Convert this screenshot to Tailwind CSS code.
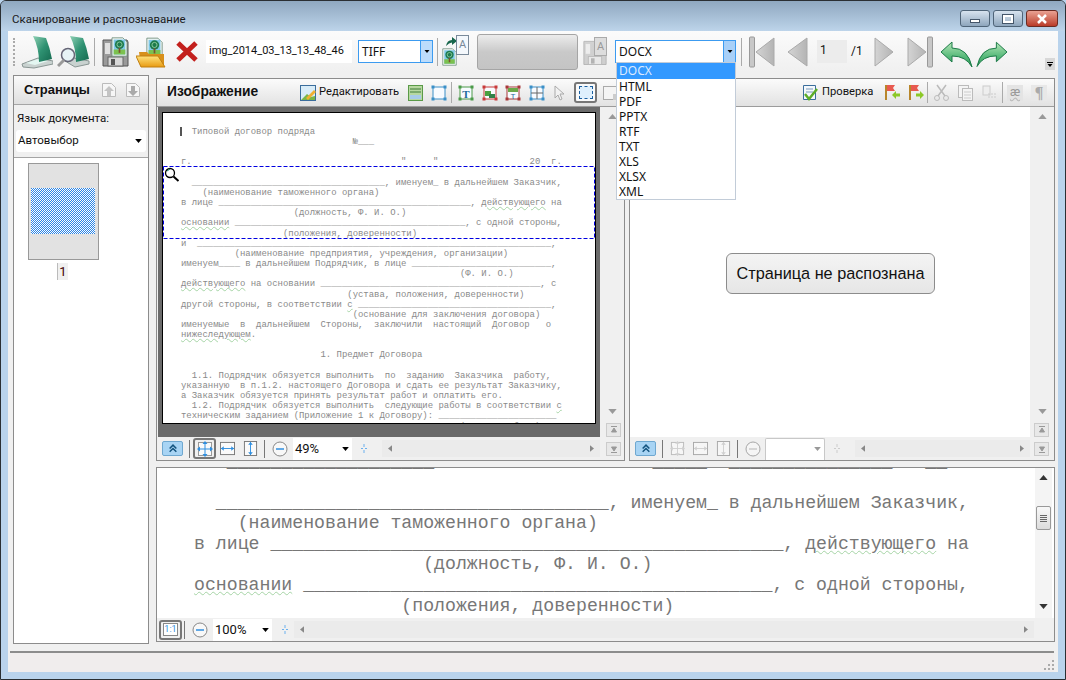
<!DOCTYPE html>
<html lang="ru">
<head>
  <meta charset="UTF-8">
  <title>Сканирование и распознавание</title>
  <script src="https://cdn.jsdelivr.net/npm/@tailwindcss/browser@4"></script>
</head>
<body class="bg-[#b9d3ec]">

<svg class="absolute w-0 h-0" xmlns="http://www.w3.org/2000/svg">
  <defs>
    <linearGradient id="lid" x1="0" y1="0" x2="1" y2="1"><stop offset="0" stop-color="#8fd0b4"/><stop offset=".5" stop-color="#2f9272"/><stop offset="1" stop-color="#14694f"/></linearGradient>
    <linearGradient id="gr" x1="0" y1="0" x2="1" y2="0"><stop offset="0" stop-color="#d4d4d4"/><stop offset="1" stop-color="#b4b4b4"/></linearGradient>
    <linearGradient id="arrow" x1="0" y1="0" x2="0" y2="1"><stop offset="0" stop-color="#b6e6b8"/><stop offset=".6" stop-color="#54b878"/><stop offset="1" stop-color="#2f9a58"/></linearGradient>
    <linearGradient id="folder" x1="0" y1="0" x2="0" y2="1"><stop offset="0" stop-color="#ffe27a"/><stop offset="1" stop-color="#e89a12"/></linearGradient>
    <pattern id="dither" width="2" height="2" patternUnits="userSpaceOnUse"><rect width="2" height="2" fill="#fff"/><rect width="1" height="1" fill="#2b85e6"/><rect x="1" y="1" width="1" height="1" fill="#2b85e6"/></pattern>
  </defs>
  <symbol id="tree" viewBox="0 0 20 24">
    <path d="M1 1h13l5 5v17H1z" fill="#f4f8f4" stroke="#6a8a7a"/>
    <rect x="3" y="3" width="14" height="18" fill="#7fc8e8"/>
    <rect x="3" y="15" width="14" height="6" fill="#7cc14e"/>
    <circle cx="10" cy="9" r="5.500" fill="#1d7a4e"/>
    <circle cx="10" cy="9" r="3" fill="none" stroke="#9ad6a8"/>
    <rect x="9" y="13" width="2" height="6" fill="#7a5230"/>
  </symbol>
  <symbol id="floppy" viewBox="0 0 27 29">
    <path d="M1 2h24l1 2v24H1z" fill="#9a9a9a" stroke="#555"/>
    <rect x="6" y="19" width="15" height="9" fill="#d8d8d8" stroke="#666"/>
    <rect x="9" y="21" width="4" height="6" fill="#555"/>
    <rect x="3" y="5" width="5" height="11" fill="#e0e0e0"/>
  </symbol>
  <symbol id="triUp" viewBox="0 0 10 6"><path d="M5 0l5 6H0z" fill="currentColor"/></symbol>
  <symbol id="triDown" viewBox="0 0 10 6"><path d="M0 0h10L5 6z" fill="currentColor"/></symbol>
  <symbol id="triLeft" viewBox="0 0 6 10"><path d="M6 0v10L0 5z" fill="currentColor"/></symbol>
  <symbol id="triRight" viewBox="0 0 6 10"><path d="M0 0l6 5-6 5z" fill="currentColor"/></symbol>
  <symbol id="dbl" viewBox="0 0 12 10"><path d="M2 5l4-4 4 4M2 9l4-4 4 4" fill="none" stroke="currentColor" stroke-width="1.800"/></symbol>
  <symbol id="fitAll" viewBox="0 0 16 16"><rect x="1.500" y="1.500" width="13" height="13" fill="#fafafa" stroke="#999"/><path d="M8 1v14M1 8h14" stroke="currentColor"/><path d="M8 0l2.500 3h-5zM8 16l2.500-3h-5zM0 8l3-2.500v5zM16 8l-3-2.500v5z" fill="currentColor"/></symbol>
  <symbol id="fitW" viewBox="0 0 16 16"><rect x=".5" y="1.500" width="15" height="13" fill="#fafafa" stroke="#777"/><path d="M1 8h14" stroke="currentColor"/><path d="M1 8l3-2.500v5zM15 8l-3-2.500v5z" fill="currentColor"/></symbol>
  <symbol id="fitH" viewBox="0 0 16 16"><rect x="1.500" y=".5" width="13" height="15" fill="#fafafa" stroke="#777"/><path d="M8 1v14" stroke="currentColor"/><path d="M8 1l2.500 3h-5zM8 15l2.500-3h-5z" fill="currentColor"/></symbol>
  <symbol id="minus" viewBox="0 0 16 16"><circle cx="8" cy="8" r="7" fill="#f8f8f8" stroke="#888"/><path d="M4 8h8" stroke="currentColor" stroke-width="1.500"/></symbol>
  <symbol id="frame" viewBox="0 0 16 16"><rect x="2" y="2" width="12" height="12" fill="#f8fbff" stroke="currentColor"/><rect x=".5" y=".5" width="3" height="3" fill="currentColor"/><rect x="12.500" y=".5" width="3" height="3" fill="currentColor"/><rect x=".5" y="12.500" width="3" height="3" fill="currentColor"/><rect x="12.500" y="12.500" width="3" height="3" fill="currentColor"/></symbol>
</svg>

<div class="relative w-[1066px] h-[680px] overflow-hidden border border-[#2a2f33] rounded-t-md bg-[#b9d3ec] font-['Roboto',sans-serif] text-[11.500px] text-[#111]">

  <!-- title bar -->
  <div class="h-[30px] flex items-start bg-linear-to-b from-[#8fa8c0] to-[#bdd4ea]">
    <span class="ml-[11px] mt-[9px] leading-[18px] text-[#1a1a1a]">Сканирование и распознавание</span>
    <div class="ml-auto mt-[9px] mr-[7px] flex gap-[3px]">
      <div class="w-[30px] h-[17px] rounded-[3px] border border-[#4f6478] bg-linear-to-b from-[#d7e3ef] to-[#8ea6bd] flex items-center justify-center"><div class="w-[10px] h-[4px] mt-[5px] bg-white border border-[#44566a]"></div></div>
      <div class="w-[30px] h-[17px] rounded-[3px] border border-[#4f6478] bg-linear-to-b from-[#d7e3ef] to-[#8ea6bd] flex items-center justify-center"><div class="w-[10px] h-[8px] bg-white/10 border-2 border-white outline outline-[#44566a]"></div></div>
      <div class="w-[32px] h-[17px] rounded-[3px] border border-[#6b2b22] bg-linear-to-b from-[#e9a193] to-[#b93a28] flex items-center justify-center">
        <svg class="w-[12px] h-[10px]" viewBox="0 0 12 10"><path d="M2 1l8 8M10 1L2 9" stroke="#fff" stroke-width="2.500"/></svg>
      </div>
    </div>
  </div>

  <div class="ml-[7px] w-[1050px] h-[641px] bg-[#f0f0f0] flex flex-col">

    <!-- main toolbar -->
    <div class="relative h-[41px] flex-none flex items-center bg-linear-to-b from-[#fbfbfb] to-[#f0f0f0]">
      <div class="ml-[5px] w-[2px] h-[28px] border-l-2 border-dotted border-[#aaa]"></div>
      <svg class="ml-[6px] w-[32px] h-[34px]" viewBox="0 0 32 34">
        <path d="M1 29l16-6 15 3v3l-19 4-11-1z" fill="#c9d2d0" stroke="#8a9694"/>
        <path d="M5 28l12-4 10 2-13 4z" fill="#e3f6f1"/>
        <path d="M12 1l13 2q4 10 6 21l-13 3q0-14-6-26z" fill="url(#lid)"/>
      </svg>
      <svg class="ml-[4px] w-[33px] h-[34px]" viewBox="0 0 33 34">
        <path d="M8 26l9-3 15 3v3l-14 3z" fill="#c9d2d0" stroke="#8a9694"/>
        <path d="M13 1l13 2q4 10 6 21l-13 3q0-14-6-26z" fill="url(#lid)"/>
        <circle cx="11" cy="20" r="6.500" fill="#e6f3f6" stroke="#667" stroke-width="1.500"/>
        <path d="M7 25l-6 6" stroke="#999" stroke-width="3"/>
      </svg>
      <div class="ml-[4px] w-px h-[28px] bg-[#aaa]"></div>
      <div class="relative ml-[7px] w-[27px] h-[30px]">
        <svg class="absolute left-0 top-[1px] w-[27px] h-[29px]"><use href="#floppy"/></svg>
        <svg class="absolute left-[9px] top-0 w-[17px] h-[20px]"><use href="#tree"/></svg>
      </div>
      <div class="relative ml-[7px] w-[30px] h-[30px]">
        <svg class="absolute left-[10px] top-0 w-[17px] h-[21px]"><use href="#tree"/></svg>
        <svg class="absolute left-0 top-[12px] w-[30px] h-[19px]" viewBox="0 0 30 19"><path d="M3 3h8l2 2h15v13H5z" fill="#d8901a"/><path d="M0 7h22l7 11H5z" fill="url(#folder)" stroke="#c07f10"/></svg>
      </div>
      <svg class="ml-[10px] w-[22px] h-[21px]" viewBox="0 0 22 21"><path d="M2 2l18 17M20 2L2 19" stroke="#c3201d" stroke-width="5"/></svg>
      <div class="ml-[8px] w-[146px] h-[23px] bg-white pl-[3px] text-[11px] leading-[22px] whitespace-nowrap">img_2014_03_13_13_48_46</div>
      <div class="ml-[6px] w-[75px] h-[23px] bg-white border border-[#3c9bf0] flex">
        <span class="flex-1 pl-[3px] leading-[21px] text-[12px] font-['Noto_Sans',sans-serif]">TIFF</span>
        <div class="w-[12px] bg-[#bcdcfb] border-l border-[#3c9bf0] flex items-center justify-center"><svg class="w-[6px] h-[3px] text-black"><use href="#triDown"/></svg></div>
      </div>
      <div class="ml-[4px] w-px h-[28px] bg-[#aaa]"></div>
      <div class="relative ml-[4px] w-[30px] h-[34px]">
        <svg class="absolute left-0 top-[11px] w-[15px] h-[22px]"><use href="#tree"/></svg>
        <svg class="absolute left-[3px] top-[2px] w-[12px] h-[10px]" viewBox="0 0 12 10"><path d="M1 9q1-6 6-6V0l5 4-5 4V5.500q-3 0-6 3.500z" fill="#17664c"/></svg>
        <div class="absolute left-[14px] top-0 w-[13px] h-[20px] border border-[#7a8a9a] bg-[#f4f8fc] text-center text-[11px] leading-[18px] text-[#789]">A</div>
      </div>
      <div class="ml-[5px] w-[101px] h-[36px] rounded-[3px] border border-[#a5a5a5] bg-linear-to-b from-[#ececec] via-[#c9c9c9] to-[#c4c4c4]"></div>
      <div class="relative ml-[5px] w-[27px] h-[30px]">
        <svg class="absolute left-0 top-[2px] w-[24px] h-[27px] opacity-40"><use href="#floppy"/></svg>
        <div class="absolute left-[11px] top-0 w-[13px] h-[19px] border border-[#aaa] bg-[#ddd] text-center text-[11px] leading-[17px] text-[#999]">A</div>
      </div>
      <!-- combo with open list -->
      <div class="relative ml-[5px] w-[121px] h-[23px] bg-white border border-[#3c9bf0] flex font-['Noto_Sans',sans-serif] text-[12px]">
        <span class="flex-1 pl-[3px] leading-[21px]">DOCX</span>
        <div class="w-[12px] bg-[#a8d0f8] border-l border-[#3c9bf0] flex items-center justify-center"><svg class="w-[6px] h-[3px] text-black"><use href="#triDown"/></svg></div>
        <div class="absolute z-10 left-0 top-[21px] w-[120px] h-[138px] bg-white border border-[#c2ccd8] leading-[15px]">
          <div class="h-[16px] pl-[2px] bg-[#3399ff] text-[#dceaff]">DOCX</div>
          <div class="pl-[2px]">HTML</div>
          <div class="pl-[2px]">PDF</div>
          <div class="pl-[2px]">PPTX</div>
          <div class="pl-[2px]">RTF</div>
          <div class="pl-[2px]">TXT</div>
          <div class="pl-[2px]">XLS</div>
          <div class="pl-[2px]">XLSX</div>
          <div class="pl-[2px]">XML</div>
        </div>
      </div>
      <div class="ml-[5px] w-px h-[28px] bg-[#aaa]"></div>
      <svg class="ml-[7px] w-[26px] h-[32px]" viewBox="0 0 26 32"><rect x=".5" y="1" width="5" height="30" rx="1" fill="#c8c8c8" stroke="#999"/><path d="M25 2v28L7 16z" fill="url(#gr)" stroke="#aaa"/></svg>
      <svg class="ml-[12px] w-[21px] h-[32px]" viewBox="0 0 21 32"><path d="M20 2v28L1 16z" fill="url(#gr)" stroke="#aaa"/></svg>
      <div class="ml-[9px] w-[30px] h-[23px] bg-[#ececec] pl-[3px] leading-[21px] text-[12px]">1</div>
      <div class="ml-[4px] w-[16px] leading-[21px] text-[12px]">/1</div>
      <svg class="ml-[7px] w-[20px] h-[32px]" viewBox="0 0 20 32"><path d="M1 2v28l18-14z" fill="url(#gr)" stroke="#aaa"/></svg>
      <svg class="ml-[13px] w-[26px] h-[32px]" viewBox="0 0 26 32"><rect x="20.500" y="1" width="5" height="30" rx="1" fill="#c8c8c8" stroke="#999"/><path d="M1 2v28l18-14z" fill="url(#gr)" stroke="#aaa"/></svg>
      <svg class="ml-[7px] w-[33px] h-[32px]" viewBox="0 0 33 32"><path d="M1 16L12 6v6q16 0 20 19-6-11-20-11v6z" fill="url(#arrow)" stroke="#1c7a48"/></svg>
      <svg class="ml-[3px] w-[32px] h-[32px]" viewBox="0 0 33 32"><path d="M32 16L21 6v6Q5 12 1 31q6-11 20-11v6z" fill="url(#arrow)" stroke="#1c7a48"/></svg>
      <div class="absolute right-[3px] bottom-[2px] w-[10px] h-[12px] bg-[#d8d8d8] flex flex-col items-center justify-center gap-px"><div class="w-[6px] h-px bg-black"></div><svg class="w-[6px] h-[3px] text-black"><use href="#triDown"/></svg></div>
    </div>

    <div class="flex-none h-[580px] flex">

      <!-- pages panel -->
      <div class="ml-[5px] mt-[3px] w-[136px] h-[569px] flex-none border border-[#8c8c8c] bg-white flex flex-col">
        <div class="h-[28px] flex-none flex items-center bg-linear-to-b from-[#fafafa] to-[#dfdfdf]">
          <span class="ml-[10px] w-[77px] font-['Liberation_Sans',sans-serif] font-bold text-[13px]">Страницы</span>
          <svg class="w-[16px] h-[16px]" viewBox="0 0 16 16"><path d="M1.500 1.500h9l4 4v9h-13z" fill="#f6f6f6" stroke="#bbb"/><path d="M8 4l5 5h-3v5H6V9H3z" fill="#c4c4c4"/></svg>
          <svg class="ml-[8px] w-[16px] h-[16px]" viewBox="0 0 16 16"><path d="M1.500 1.500h9l4 4v9h-13z" fill="#f6f6f6" stroke="#bbb"/><path d="M8 14l5-5h-3V4H6v5H3z" fill="#aaa"/></svg>
        </div>
        <div class="h-[54px] flex-none bg-[#f0f0f0] border-y border-[#a5a5a5] flex flex-col">
          <div class="mt-[4px] ml-[3px] leading-[18px]">Язык документа:</div>
          <div class="mt-[3px] ml-[2px] w-[130px] h-[22px] bg-white rounded-[3px] flex items-center justify-between pl-[2px] pr-[4px]">
            <span>Автовыбор</span><svg class="w-[7px] h-[4px] text-black"><use href="#triDown"/></svg>
          </div>
        </div>
        <div class="ml-[14px] mt-[5px] w-[71px] h-[97px] bg-[#e2e2e2] border border-[#999] pt-[24px] pl-[2px]">
          <svg class="w-[64px] h-[46px]" shape-rendering="crispEdges"><rect width="64" height="46" fill="url(#dither)"/></svg>
        </div>
        <div class="ml-[43px] mt-[3px] w-[11px] h-[17px] bg-[#f0f0f0] border-l border-[#bbb] text-center leading-[17px] text-[13px] text-[#400]">1</div>
      </div>

      <div class="ml-[7px] w-[899px] flex-none flex flex-col">
        <div class="mt-[6px] h-[383px] flex-none flex">

          <!-- image panel -->
          <div class="w-[469px] flex-none border border-[#8c8c8c] border-b-2 flex flex-col">
            <div class="h-[28px] flex-none flex items-center bg-linear-to-b from-[#fbfbfb] to-[#e2e2e2] border-b border-[#9c9c9c]">
              <span class="ml-[10px] w-[133px] font-['Liberation_Sans',sans-serif] font-bold text-[13.800px]">Изображение</span>
              <svg class="w-[16px] h-[16px]" viewBox="0 0 16 16"><rect x=".5" y=".5" width="15" height="15" fill="#d8ecf8" stroke="#3a6d9c"/><path d="M1 15l6-6 4 3 4-1v4z" fill="#7ab648"/><path d="M6 13L14 5l2 2-8 8z" fill="#f0b030"/></svg>
              <span class="ml-[3px] w-[80px] whitespace-nowrap text-[11.200px]">Редактировать</span>
              <svg class="ml-[9px] w-[15px] h-[16px]" viewBox="0 0 15 16"><rect x=".5" y=".5" width="14" height="15" fill="#b7d8a0" stroke="#5a9a48"/><path d="M2 4h11M2 7h11" stroke="#3f7a38"/><rect x="2" y="10" width="11" height="4" fill="#a8cce8"/></svg>
              <svg class="ml-[8px] w-[16px] h-[16px] text-[#3a8fc8]"><use href="#frame"/></svg>
              <div class="ml-[4px] w-px h-[21px] bg-[#aaa]"></div>
              <svg class="ml-[6px] w-[16px] h-[16px] text-[#4a9a48]" viewBox="0 0 16 16"><use href="#frame"/><text x="8" y="12.500" text-anchor="middle" font-size="11" font-weight="700" font-family="Liberation Serif" fill="#1f6a9c">T</text></svg>
              <svg class="ml-[8px] w-[16px] h-[16px] text-[#c83a3a]" viewBox="0 0 16 16"><use href="#frame"/><path d="M3 6h6v5H3z" fill="#4aa040"/><path d="M7 9h6v4H7z" fill="#2f8048"/></svg>
              <svg class="ml-[7px] w-[16px] h-[16px] text-[#a83838]" viewBox="0 0 16 16"><use href="#frame"/><rect x="3" y="3" width="10" height="4" fill="#6aa848"/><text x="8" y="14" text-anchor="middle" font-size="8" font-family="Liberation Sans" fill="#1f6a9c">T</text></svg>
              <svg class="ml-[8px] w-[16px] h-[16px] text-[#3a8fc8]" viewBox="0 0 16 16"><use href="#frame"/><path d="M8 2v12M2 8h12" stroke="#666"/></svg>
              <svg class="ml-[9px] w-[11px] h-[16px]" viewBox="0 0 11 16"><path d="M1 1v12l3-3 2 5 2-1-2-5h4z" fill="#f2f2f2" stroke="#aaa"/></svg>
              <div class="ml-[9px] w-[23px] h-[21px] rounded-[3px] border-2 border-[#777] bg-[#fafafa] flex items-center justify-center"><div class="w-[14px] h-[13px] bg-[#dff0fd] border border-dashed border-[#1a5fa0]"></div></div>
              <svg class="ml-[5px] w-[18px] h-[16px]" viewBox="0 0 18 16"><rect x="1.500" y="1.500" width="13" height="13" fill="#f4f4f4" stroke="#aaa"/><rect x="11" y="9" width="6" height="6" fill="#ccc"/></svg>
            </div>
            <div class="h-[330px] flex-none flex">
              <div class="ml-px w-[442px] flex-none bg-[#6b6b6b] pl-[4px] pt-[5px]">
                <!-- scanned page -->
                <div class="relative w-[434px] h-[312px] border border-black bg-white overflow-hidden">
                  <div class="absolute left-[17px] top-[14px] w-[2px] h-[9px] bg-[#555]"></div>
                  <div class="pl-[18px] pt-[14px] font-['Liberation_Mono',monospace] text-[8.950px] leading-[10.15px] text-[#8a8a8a] whitespace-pre">  Типовой договор подряда
                                №___

г.                                       "     "                 20  г.

  ____________________________________, именуем_ в дальнейшем Заказчик,
    (наименование таможенного органа)
в лице _______________________________________________, <span class="underline decoration-wavy decoration-1 decoration-[#a6d4a6]">действующего</span> на
                     (должность, Ф. И. О.)
<span class="underline decoration-wavy decoration-1 decoration-[#a6d4a6]">основании</span> ___________________________________________, с одной стороны,
                   (положения, доверенности)
и  __________________________________________________________________,
          (наименование предприятия, учреждения, организации)
именуем____ в дальнейшем Подрядчик, в лице __________________________,
                                                    (Ф. И. О.)
<span class="underline decoration-wavy decoration-1 decoration-[#a6d4a6]">действующего</span> на основании _________________________________________, с
                               (устава, положения, доверенности)
другой стороны, в соответствии <span class="underline decoration-wavy decoration-1 decoration-[#a6d4a6]">с</span> ____________________________________,
                                (основание для заключения договора)
именуемые  в  дальнейшем  Стороны,  заключили  настоящий  Договор   о
<span class="underline decoration-wavy decoration-1 decoration-[#a6d4a6]">нижеследующем</span>.

                          1. Предмет Договора

  1.1. Подрядчик обязуется выполнить  по  заданию  Заказчика  работу,
указанную  в п.1.2. настоящего Договора и сдать ее результат Заказчику,
а Заказчик обязуется принять результат работ и оплатить его.
  1.2. Подрядчик обязуется выполнить  следующие работы в соответствии <span class="underline decoration-wavy decoration-1 decoration-[#a6d4a6]">с</span>
техническим заданием (Приложение 1 к Договору): ______________________
                                                    (виды   работы)</div>
                  <!-- selection rectangle -->
                  <svg class="absolute left-0 top-[53px] w-[432px] h-[73px]"><rect x=".5" y=".5" width="431" height="72" fill="none" stroke="#0000e0" stroke-dasharray="4 2"/></svg>
                  <svg class="absolute left-[1px] top-[54px] w-[16px] h-[15px]" viewBox="0 0 16 15"><circle cx="6" cy="6" r="4.500" fill="#fff" stroke="#000" stroke-width="1.300"/><path d="M3 4l3-2" stroke="#1a8a70"/><path d="M9.500 9.500l5 4.500" stroke="#000" stroke-width="2"/></svg>
                </div>
              </div>
              <div class="w-[25px] flex-none flex flex-col items-center text-[#999]">
                <svg class="mt-[7px] w-[9px] h-[5px]"><use href="#triUp"/></svg>
                <svg class="mt-[290px] w-[9px] h-[5px]"><use href="#triDown"/></svg>
              </div>
            </div>
            <div class="relative h-[23px] flex-none flex items-center bg-[#f0f0f0]">
              <div class="ml-[5px] w-[21px] h-[15px] bg-[#a8d4f4] border border-[#6fa8d0] rounded-[2px] flex items-center justify-center text-[#14547f]"><svg class="w-[10px] h-[9px]"><use href="#dbl"/></svg></div>
              <div class="ml-[6px] w-px h-[18px] bg-[#777]"></div>
              <div class="ml-[3px] w-[23px] h-[21px] rounded-[3px] border-2 border-[#777] flex items-center justify-center text-[#2f8fe0]"><svg class="w-[16px] h-[16px]"><use href="#fitAll"/></svg></div>
              <svg class="ml-[4px] w-[15px] h-[15px] text-[#2f8fe0]"><use href="#fitW"/></svg>
              <svg class="ml-[8px] w-[15px] h-[15px] text-[#2f8fe0]"><use href="#fitH"/></svg>
              <div class="ml-[6px] w-px h-[18px] bg-[#777]"></div>
              <svg class="ml-[7px] w-[16px] h-[16px] text-[#2f8fe0]"><use href="#minus"/></svg>
              <div class="ml-[5px] w-[59px] h-[22px] bg-white flex items-center justify-between pl-[2px] pr-[3px] text-[13px]"><span>49%</span><svg class="w-[7px] h-[4px] text-black"><use href="#triDown"/></svg></div>
              <svg class="ml-[9px] w-[6px] h-[9px]" viewBox="0 0 6 9"><path d="M3 0v3M3 6v3M0 4.500h2M4 4.500h2" stroke="#6ab0ee"/></svg>
              <div class="ml-[15px] w-[218px] h-[17px] bg-[#ebebeb] flex items-center justify-between px-[6px] text-[#888]"><svg class="w-[4px] h-[7px]"><use href="#triLeft"/></svg><svg class="w-[4px] h-[7px]"><use href="#triRight"/></svg></div>
              <div class="absolute right-[3px] -top-[14px] w-[15px] h-[14px] bg-[#e8e8e8] border border-[#ccc] flex items-center justify-center text-[#999]"><svg class="w-[8px] h-[8px]" viewBox="0 0 8 8"><path d="M1 .5h6M4 2L1.500 6h5z" stroke="currentColor" fill="currentColor"/></svg></div>
              <div class="absolute right-[3px] top-[5px] w-[15px] h-[14px] bg-[#e8e8e8] border border-[#ccc] flex items-center justify-center text-[#999]"><svg class="w-[8px] h-[8px]" viewBox="0 0 8 8"><path d="M1 7.500h6M4 6L1.500 2h5z" stroke="currentColor" fill="currentColor"/></svg></div>
            </div>
          </div>

          <!-- recognized panel -->
          <div class="ml-[4px] w-[426px] flex-none border border-[#8c8c8c] border-b-2 flex flex-col">
            <div class="h-[28px] flex-none flex items-center bg-linear-to-b from-[#fbfbfb] to-[#e2e2e2] border-b border-[#9c9c9c]">
              <svg class="ml-[172px] w-[16px] h-[17px]" viewBox="0 0 16 17"><path d="M1.500 1.500h12v14h-12z" fill="#f4f8fc" stroke="#3a6d9c"/><path d="M4 5h7M4 8h7" stroke="#7a9ab8"/><path d="M3 10l4 5 8-10" fill="none" stroke="#5cad28" stroke-width="2.500"/></svg>
              <span class="ml-[4px] w-[53px] whitespace-nowrap text-[11.200px]">Проверка</span>
              <svg class="ml-[9px] w-[17px] h-[17px]" viewBox="0 0 17 17"><path d="M2 1v15" stroke="#b8862a" stroke-width="2"/><path d="M3 1h8l-2 3 2 3H3z" fill="#e85a50"/><path d="M8 11l4-4v2.500h4v3h-4V15z" fill="#8cc828"/></svg>
              <svg class="ml-[7px] w-[17px] h-[17px]" viewBox="0 0 17 17"><path d="M2 1v15" stroke="#b8862a" stroke-width="2"/><path d="M3 1h8l-2 3 2 3H3z" fill="#e85a50"/><path d="M16 11l-4-4v2.500H8v3h4V15z" fill="#8cc828"/></svg>
              <div class="ml-[2px] w-px h-[21px] bg-[#aaa]"></div>
              <svg class="ml-[5px] w-[17px] h-[17px]" viewBox="0 0 17 17"><path d="M4 1l8 11M13 1L5 12" stroke="#bbb" stroke-width="1.500"/><circle cx="4" cy="14" r="2.500" fill="none" stroke="#bbb"/><circle cx="13" cy="14" r="2.500" fill="none" stroke="#bbb"/></svg>
              <svg class="ml-[8px] w-[15px] h-[16px]" viewBox="0 0 15 16"><rect x=".5" y=".5" width="10" height="12" fill="#f4f4f4" stroke="#bbb"/><rect x="4.500" y="3.500" width="10" height="12" fill="#f4f4f4" stroke="#bbb"/><path d="M6 7h7M6 10h7M6 13h7" stroke="#ccc"/></svg>
              <svg class="ml-[9px] w-[15px] h-[16px]" viewBox="0 0 15 16"><rect x="1" y="1" width="7" height="9" fill="#eee" stroke="#ccc"/><path d="M6 9h8M6 12h8" stroke="#ccc" stroke-dasharray="2 1"/></svg>
              <div class="ml-[5px] w-px h-[21px] bg-[#aaa]"></div>
              <div class="ml-[4px] w-[16px] h-[16px] bg-[#e4e4e4] text-center text-[12px] leading-[15px] text-[#999] underline decoration-wavy decoration-[#bbb]">æ</div>
              <div class="ml-[8px] w-[16px] h-[16px] bg-[#e8e8e8] text-center font-['Liberation_Serif',serif] text-[16px] leading-[16px] font-bold text-[#aaa]">¶</div>
            </div>
            <div class="h-[330px] flex-none flex">
              <div class="w-[400px] flex-none bg-white flex items-center justify-center">
                <div class="w-[209px] h-[41px] mt-[3px] ml-[1px] rounded-[6px] border border-[#8c8c8c] bg-linear-to-b from-[#f4f4f4] to-[#e6e6e6] flex items-center justify-center font-['Liberation_Sans',sans-serif] text-[16.250px]">Страница не распознана</div>
              </div>
              <div class="flex-1 flex flex-col items-center text-[#999]">
                <svg class="mt-[7px] w-[9px] h-[5px]"><use href="#triUp"/></svg>
                <svg class="mt-[290px] w-[9px] h-[5px]"><use href="#triDown"/></svg>
              </div>
            </div>
            <div class="relative h-[23px] flex-none flex items-center bg-[#f0f0f0]">
              <div class="ml-[5px] w-[21px] h-[15px] bg-[#a8d4f4] border border-[#6fa8d0] rounded-[2px] flex items-center justify-center text-[#14547f]"><svg class="w-[10px] h-[9px]"><use href="#dbl"/></svg></div>
              <div class="ml-[6px] w-px h-[18px] bg-[#777]"></div>
              <svg class="ml-[7px] w-[15px] h-[15px] text-[#bbb] opacity-60"><use href="#fitAll"/></svg>
              <svg class="ml-[8px] w-[15px] h-[15px] text-[#bbb] opacity-60"><use href="#fitW"/></svg>
              <svg class="ml-[8px] w-[15px] h-[15px] text-[#bbb] opacity-60"><use href="#fitH"/></svg>
              <div class="ml-[6px] w-px h-[18px] bg-[#777]"></div>
              <svg class="ml-[7px] w-[16px] h-[16px] text-[#bbb] opacity-70"><use href="#minus"/></svg>
              <div class="ml-[4px] w-[60px] h-[22px] bg-white border border-b-0 border-[#c8c8c8] rounded-t-[2px] flex items-center justify-end pr-[3px] text-[#999]"><svg class="w-[7px] h-[4px]"><use href="#triDown"/></svg></div>
              <svg class="ml-[9px] w-[6px] h-[9px]" viewBox="0 0 6 9"><path d="M3 0v3M3 6v3M0 4.500h2M4 4.500h2" stroke="#ccc"/></svg>
              <div class="ml-[15px] w-[175px] h-[17px] bg-[#ebebeb] flex items-center justify-between px-[6px] text-[#888]"><svg class="w-[4px] h-[7px]"><use href="#triLeft"/></svg><svg class="w-[4px] h-[7px]"><use href="#triRight"/></svg></div>
              <div class="absolute right-[5px] -top-[14px] w-[15px] h-[14px] bg-[#e8e8e8] border border-[#ccc] flex items-center justify-center text-[#999]"><svg class="w-[8px] h-[8px]" viewBox="0 0 8 8"><path d="M1 .5h6M4 2L1.500 6h5z" stroke="currentColor" fill="currentColor"/></svg></div>
              <div class="absolute right-[5px] top-[5px] w-[15px] h-[14px] bg-[#e8e8e8] border border-[#ccc] flex items-center justify-center text-[#999]"><svg class="w-[8px] h-[8px]" viewBox="0 0 8 8"><path d="M1 7.500h6M4 6L1.500 2h5z" stroke="currentColor" fill="currentColor"/></svg></div>
            </div>
          </div>
        </div>

        <!-- zoomed selection panel -->
        <div class="mt-[6px] h-[175px] flex-none border border-[#8c8c8c] border-b-2 flex flex-col">
          <div class="h-[150px] flex-none flex bg-white">
            <div class="flex-1 overflow-hidden">
              <div class="ml-[37px] -mt-[16.500px] font-['Liberation_Mono',monospace] text-[18.200px] leading-[20.6px] text-[#777] whitespace-pre">   ___________________                    _____  _______________   __

  ____________________________________, именуем_ в дальнейшем Заказчик,
    (наименование таможенного органа)
в лице _______________________________________________, <span class="underline decoration-wavy decoration-1 decoration-[#a6d4a6]">действующего</span> на
                     (должность, Ф. И. О.)
<span class="underline decoration-wavy decoration-1 decoration-[#a6d4a6]">основании</span> ___________________________________________, с одной стороны,
                   (положения, доверенности)</div>
            </div>
            <div class="w-[17px] flex-none mr-[2px] bg-[#f4f4f4] flex flex-col items-center text-[#333]">
              <svg class="mt-[7px] w-[9px] h-[5px]"><use href="#triUp"/></svg>
              <div class="mt-[26px] w-[15px] h-[24px] rounded-[2px] border border-[#999] bg-linear-to-b from-[#f8f8f8] to-[#dcdcdc] flex flex-col items-center justify-center gap-px"><div class="w-[7px] h-px bg-[#666]"></div><div class="w-[7px] h-px bg-[#666]"></div><div class="w-[7px] h-px bg-[#666]"></div><div class="w-[7px] h-px bg-[#666]"></div></div>
              <svg class="mt-[74px] w-[9px] h-[5px]"><use href="#triDown"/></svg>
            </div>
          </div>
          <div class="h-[23px] flex-none flex items-center bg-[#f0f0f0]">
            <div class="ml-[2px] w-[23px] h-[20px] rounded-[3px] border-2 border-[#777] flex items-center justify-center"><div class="w-[15px] h-[13px] bg-white border border-[#888] text-[9px] leading-[11px] text-center text-[#2f8fe0]">1:1</div></div>
            <div class="ml-[2px] w-px h-[18px] bg-[#777]"></div>
            <svg class="ml-[7px] w-[16px] h-[16px] text-[#2f8fe0]"><use href="#minus"/></svg>
            <div class="ml-[5px] w-[59px] h-[22px] bg-white flex items-center justify-between pl-[2px] pr-[3px] text-[13px]"><span>100%</span><svg class="w-[7px] h-[4px] text-black"><use href="#triDown"/></svg></div>
            <svg class="ml-[10px] w-[6px] h-[9px]" viewBox="0 0 6 9"><path d="M3 0v3M3 6v3M0 4.500h2M4 4.500h2" stroke="#6ab0ee"/></svg>
            <div class="ml-[6px] w-[740px] h-[17px] bg-[#ebebeb] flex items-center justify-between px-[6px] text-[#888]"><svg class="w-[4px] h-[7px]"><use href="#triLeft"/></svg><svg class="w-[4px] h-[7px]"><use href="#triRight"/></svg></div>
          </div>
        </div>
      </div>
    </div>

    <!-- status bar -->
    <div class="relative ml-[2px] mt-[-1px] h-[21px] w-[1044px] flex-none border-t-2 border-[#8c8c8c] bg-[#f0eded]">
      <svg class="absolute right-[-2px] bottom-0 w-[14px] h-[13px]" viewBox="0 0 14 13"><path d="M10 1h2v2h-2zM6 5h2v2H6zM10 5h2v2h-2zM2 9h2v2H2zM6 9h2v2H6zM10 9h2v2h-2z" fill="#aaa"/></svg>
    </div>
  </div>
</div>

</body>
</html>
